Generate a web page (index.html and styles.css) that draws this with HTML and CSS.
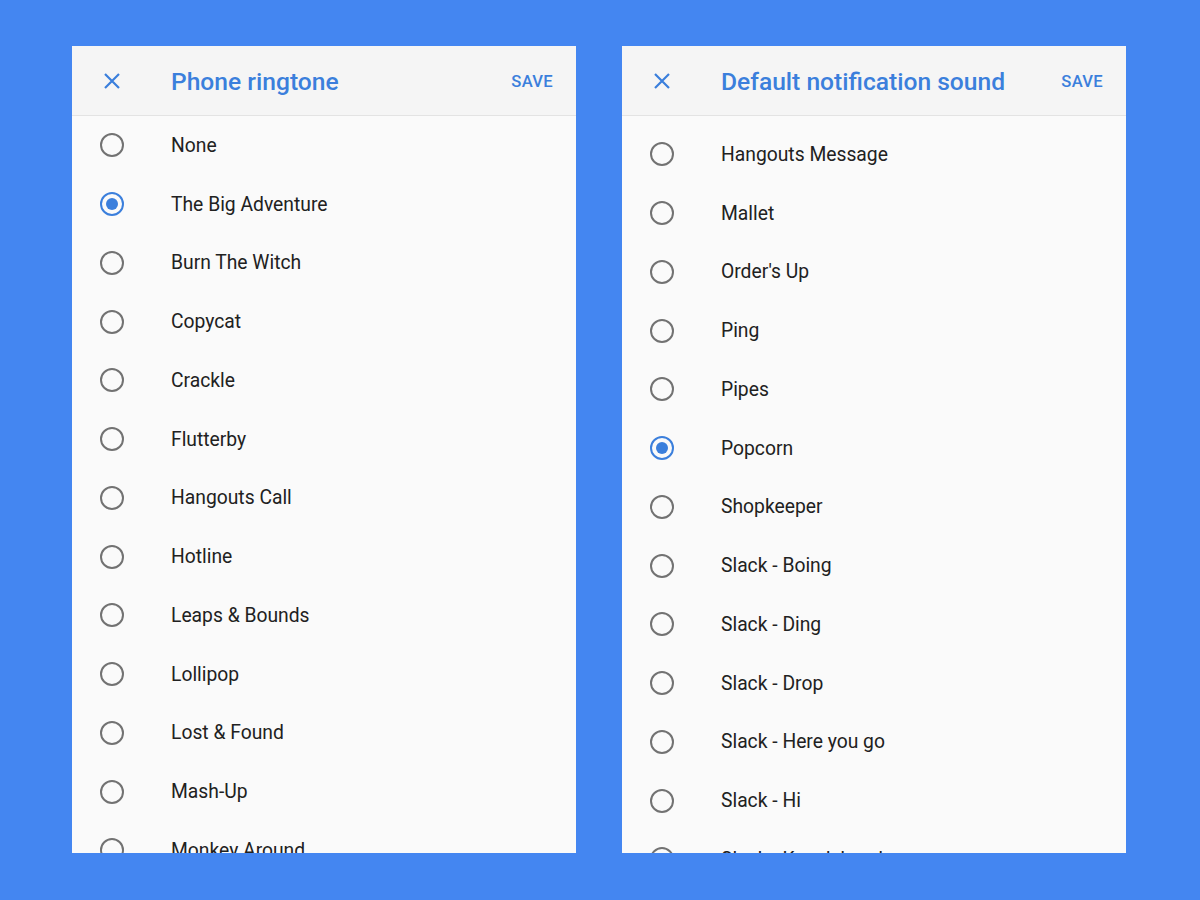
FILE: index.html
```html
<!DOCTYPE html>
<html lang="en">

    <head>
        <meta charset="UTF-8">
        <meta name="viewport" content="width=device-width,initial-scale=1.0">
        <title>Sound pickers</title>
        <link rel="stylesheet" href="styles.css">
    </head>

    <body>
        <div class="stage">
            <div class="dialog">
                <div class="bar">
                    <span class="close">
                        <svg width="18" height="18" viewBox="0 0 18 18"><path d="M2 2L16 16M16 2L2 16" stroke="#3b7fdc" stroke-width="2.2" fill="none"/></svg>
                    </span>
                    <h2 class="title">Phone ringtone</h2>
                    <a href="#" class="save">SAVE</a>
                </div>
                <ul class="list">
                    <li><span class="radio"></span>None</li>
                    <li><span class="radio on"></span>The Big Adventure</li>
                    <li><span class="radio"></span>Burn The Witch</li>
                    <li><span class="radio"></span>Copycat</li>
                    <li><span class="radio"></span>Crackle</li>
                    <li><span class="radio"></span>Flutterby</li>
                    <li><span class="radio"></span>Hangouts Call</li>
                    <li><span class="radio"></span>Hotline</li>
                    <li><span class="radio"></span>Leaps &amp; Bounds</li>
                    <li><span class="radio"></span>Lollipop</li>
                    <li><span class="radio"></span>Lost &amp; Found</li>
                    <li><span class="radio"></span>Mash-Up</li>
                    <li><span class="radio"></span>Monkey Around</li>
                </ul>
            </div>

            <div class="dialog">
                <div class="bar">
                    <span class="close">
                        <svg width="18" height="18" viewBox="0 0 18 18"><path d="M2 2L16 16M16 2L2 16" stroke="#3b7fdc" stroke-width="2.2" fill="none"/></svg>
                    </span>
                    <h2 class="title">Default notification sound</h2>
                    <a href="#" class="save">SAVE</a>
                </div>
                <ul class="list scrolled">
                    <li><span class="radio"></span>Hangouts Message</li>
                    <li><span class="radio"></span>Mallet</li>
                    <li><span class="radio"></span>Order's Up</li>
                    <li><span class="radio"></span>Ping</li>
                    <li><span class="radio"></span>Pipes</li>
                    <li><span class="radio on"></span>Popcorn</li>
                    <li><span class="radio"></span>Shopkeeper</li>
                    <li><span class="radio"></span>Slack - Boing</li>
                    <li><span class="radio"></span>Slack - Ding</li>
                    <li><span class="radio"></span>Slack - Drop</li>
                    <li><span class="radio"></span>Slack - Here you go</li>
                    <li><span class="radio"></span>Slack - Hi</li>
                    <li><span class="radio"></span>Slack - Knock brush</li>
                </ul>
            </div>
        </div>
    </body>

</html>
```

FILE: styles.css
```css
* {
    margin: 0;
    padding: 0;
    box-sizing: border-box;
}

body {
    width: 1200px;
    height: 900px;
    background-color: #4486f1;
    font-family: Roboto, "Noto Sans", sans-serif;
    overflow: hidden;
}

.stage {
    display: flex;
    gap: 46px;
    padding: 46px 0 0 72px;
}

.dialog {
    width: 504px;
    height: 807px;
    background: #fafafa;
    overflow: hidden;
}

.bar {
    display: flex;
    align-items: center;
    height: 70px;
    background: #f5f5f5;
    border-bottom: 1.5px solid #e3e3e3;
    padding: 2px 23px 0 31px;
}

.close {
    width: 18px;
    height: 18px;
    display: flex;
    margin-right: 50px;
    margin-top: -2px;
}

.title {
    flex-grow: 1;
    font-size: 24.6px;
    font-weight: 500;
    color: #3b7fdc;
}

.save {
    font-size: 16.6px;
    font-weight: 500;
    color: #3b7fdc;
    text-decoration: none;
    letter-spacing: 0.3px;
}

.list {
    list-style: none;
}

.list.scrolled {
    padding-top: 9px;
}

.list li {
    display: flex;
    align-items: center;
    height: 58.75px;
    padding-left: 28px;
    font-size: 19.3px;
    color: #212121;
}

.radio {
    width: 24px;
    height: 24px;
    border: 2px solid #727272;
    border-radius: 50%;
    margin-right: 47px;
    flex-shrink: 0;
    display: flex;
    align-items: center;
    justify-content: center;
}

.radio.on {
    border-color: #3b7fdc;
}

.radio.on::after {
    content: "";
    width: 12px;
    height: 12px;
    border-radius: 50%;
    background: #3b7fdc;
}
```
